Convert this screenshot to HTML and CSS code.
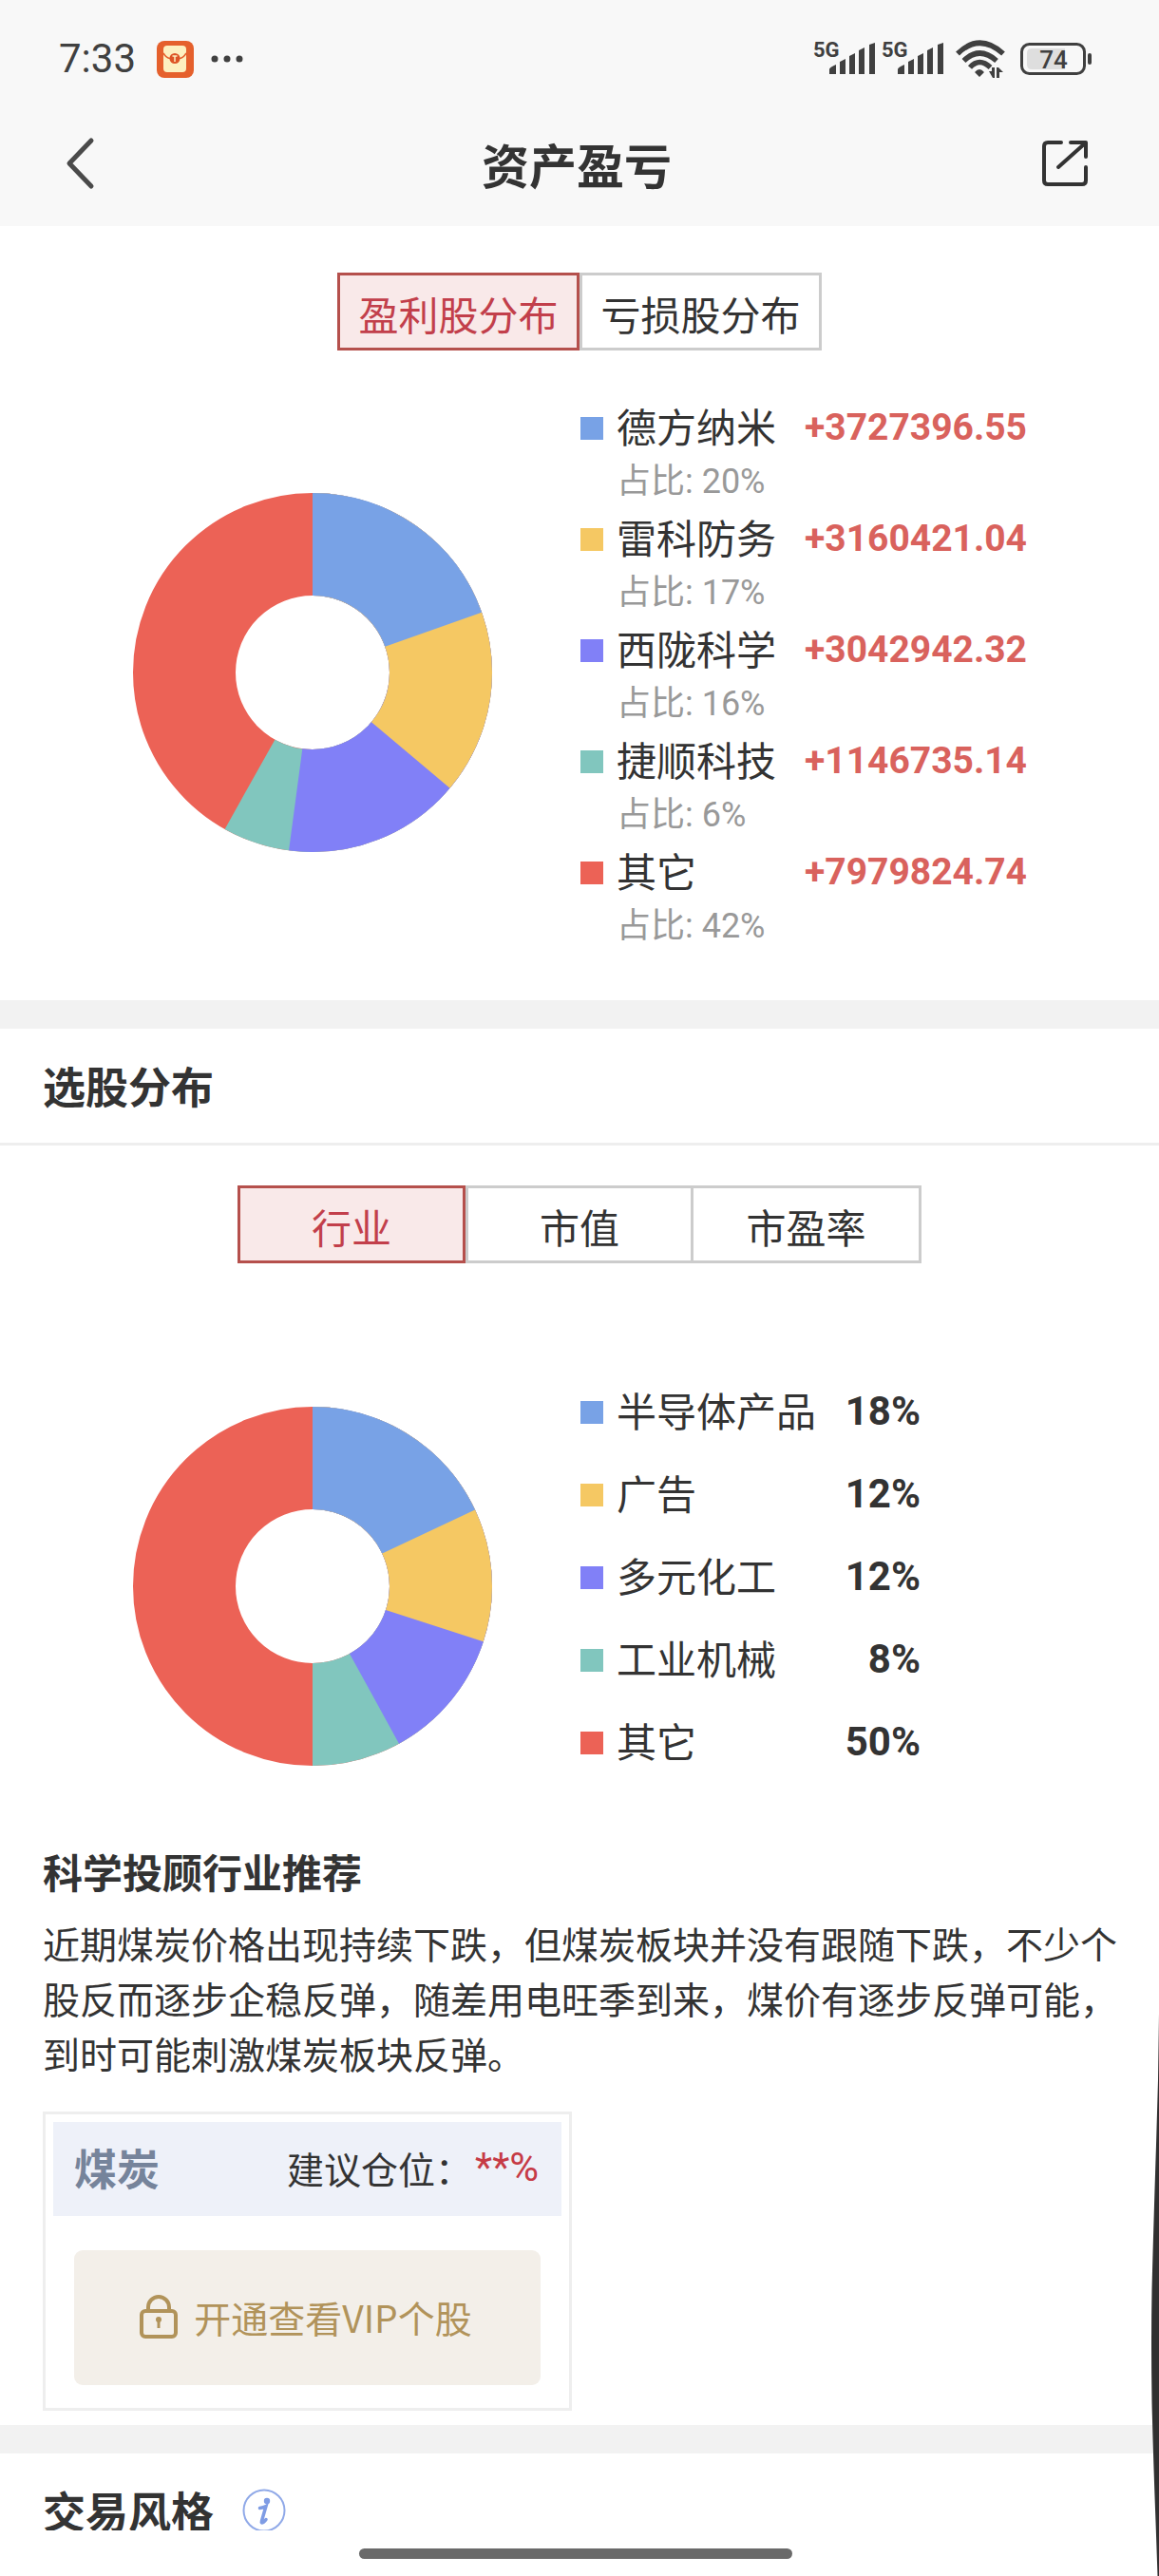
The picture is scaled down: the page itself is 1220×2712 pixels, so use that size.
FILE: index.html
```html
<!DOCTYPE html>
<html lang="zh-CN">
<head>
<meta charset="utf-8">
<meta name="viewport" content="width=device-width, initial-scale=1">
<title>资产盈亏</title>
<link rel="stylesheet" href="styles.css">
</head>
<body>
<div class="app">
  <header class="top">
    <div class="status">
      <span class="status-time">7:33</span>
      <svg class="status-app" width="39" height="39" viewBox="0 0 39 39" aria-hidden="true">
        <rect width="39" height="39" rx="8" fill="#e5602c"/>
        <rect x="7" y="5" width="24" height="28" rx="4" fill="#fdf0c0"/>
        <path d="M7 13q3 5 7 5.500h10q4-.5 7-5.500" fill="none" stroke="#e5602c" stroke-width="1.500"/>
        <circle cx="19" cy="18.500" r="5.500" fill="#dd5526"/>
        <path d="M16.500 16h5M19 16v6" stroke="#fdf0c0" stroke-width="1.500"/>
      </svg>
      <svg class="status-more" width="34" height="8" viewBox="0 0 34 8" fill="#404040" aria-hidden="true">
        <circle cx="4" cy="4" r="3.500"/><circle cx="17" cy="4" r="3.500"/><circle cx="30" cy="4" r="3.500"/>
      </svg>
      <div class="status-right">
        <svg width="66" height="52" viewBox="0 -6 66 52" fill="#404040" role="img" aria-label="5G">
          <text class="net" x="0" y="18">5G</text>
          <path d="M17 36v-5q0-2 7-5v10zM28 36V23l6-3v16zM38 36V17l6-3v22zM48 36V11l6-3v28zM59 36V5l6-2v33z"/>
        </svg>
        <svg width="66" height="52" viewBox="0 -6 66 52" fill="#404040" role="img" aria-label="5G">
          <text class="net" x="0" y="18">5G</text>
          <path d="M17 36v-5q0-2 7-5v10zM28 36V23l6-3v16zM38 36V17l6-3v22zM48 36V11l6-3v28zM59 36V5l6-2v33z"/>
        </svg>
        <svg class="wifi" width="52" height="40" viewBox="0 0 52 40" aria-hidden="true">
          <g fill="none" stroke="#404040" stroke-width="5.500">
            <path d="M2 14.500Q25-8 50 14.500"/>
            <path d="M8.500 22Q25 6 43 22"/>
            <path d="M15 29Q25 18 36.500 29"/>
          </g>
          <path d="M20 34q5-6 10 0l-5 5zM35 33h3v-4h3v11h-2zM43 40V29h2l5 5h-4v6z" fill="#404040"/>
        </svg>
        <svg width="76" height="34" viewBox="0 0 76 34" role="img" aria-label="74%">
          <rect x="1.500" y="1.500" width="66" height="31" rx="8" fill="none" stroke="#404040" stroke-width="3"/>
          <path d="M12 6h35v22H12q-5 0-5-5V11q0-5 5-5z" fill="#dedede"/>
          <rect x="71" y="11" width="4" height="12" rx="2" fill="#404040"/>
          <text class="battery" x="35" y="27" text-anchor="middle">74</text>
        </svg>
      </div>
    </div>
    <div class="navbar">
      <button class="icon-button" type="button" aria-label="返回">
        <svg width="32" height="56" viewBox="0 0 32 56"><path d="M28 4 5 28l23 24" fill="none" stroke="#4a4a4a" stroke-width="5" stroke-linecap="round" stroke-linejoin="round"/></svg>
      </button>
      <h1>资产盈亏</h1>
      <button class="icon-button share-button" type="button" aria-label="分享">
        <svg width="50" height="50" viewBox="0 0 50 50"><path d="M21 3H7Q3 3 3 7v36q0 4 4 4h36q4 0 4-4V29M31 3h16v15M46 4 18 29" fill="none" stroke="#333" stroke-width="4" stroke-linecap="round" stroke-linejoin="round"/></svg>
      </button>
    </div>
  </header>

  <main>
    <section class="profit">
      <div class="tabs">
        <button class="tab tab-wide active" type="button">盈利股分布</button>
        <button class="tab tab-wide" type="button">亏损股分布</button>
      </div>
      <div class="chart chart-profit">
        <!-- Each arc runs from the top to its cumulative share, the longest underneath -->
        <svg class="donut" viewBox="0 0 378 378" role="img" aria-label="盈利股分布图">
          <g class="ring">
            <circle class="s5" r="135"/>
            <circle class="s4" r="135" pathLength="10000" stroke-dasharray="5813 10000"/>
            <circle class="s3" r="135" pathLength="10000" stroke-dasharray="5211 10000"/>
            <circle class="s2" r="135" pathLength="10000" stroke-dasharray="3614 10000"/>
            <circle class="s1" r="135" pathLength="10000" stroke-dasharray="1956 10000"/>
          </g>
        </svg>
        <ul class="legend">
          <li><i class="dot b1"></i><span class="name">德方纳米</span><b class="amount">+3727396.55</b><span class="share">占比: 20%</span></li>
          <li><i class="dot b2"></i><span class="name">雷科防务</span><b class="amount">+3160421.04</b><span class="share">占比: 17%</span></li>
          <li><i class="dot b3"></i><span class="name">西陇科学</span><b class="amount">+3042942.32</b><span class="share">占比: 16%</span></li>
          <li><i class="dot b4"></i><span class="name">捷顺科技</span><b class="amount">+1146735.14</b><span class="share">占比: 6%</span></li>
          <li><i class="dot b5"></i><span class="name">其它</span><b class="amount">+7979824.74</b><span class="share">占比: 42%</span></li>
        </ul>
      </div>
    </section>

    <section class="band">
      <h2 class="section-title ruled">选股分布</h2>
      <div class="tabs tabs-second">
        <button class="tab active" type="button">行业</button>
        <button class="tab" type="button">市值</button>
        <button class="tab" type="button">市盈率</button>
      </div>
      <div class="chart chart-industry">
        <svg class="donut" viewBox="0 0 378 378" role="img" aria-label="行业分布图">
          <g class="ring">
            <circle class="s5" r="135"/>
            <path class="s4" d="M135 0A135 135 0 0 1 -135 0"/>
            <circle class="s3" r="135" pathLength="10000" stroke-dasharray="4200 10000"/>
            <circle class="s2" r="135" pathLength="10000" stroke-dasharray="3000 10000"/>
            <circle class="s1" r="135" pathLength="10000" stroke-dasharray="1800 10000"/>
          </g>
        </svg>
        <ul class="legend">
          <li><i class="dot b1"></i><span class="name">半导体产品</span><b class="percent">18%</b></li>
          <li><i class="dot b2"></i><span class="name">广告</span><b class="percent">12%</b></li>
          <li><i class="dot b3"></i><span class="name">多元化工</span><b class="percent">12%</b></li>
          <li><i class="dot b4"></i><span class="name">工业机械</span><b class="percent">8%</b></li>
          <li><i class="dot b5"></i><span class="name">其它</span><b class="percent">50%</b></li>
        </ul>
      </div>
      <div class="advice">
        <h3>科学投顾行业推荐</h3>
        <p>近期煤炭价格出现持续下跌，但煤炭板块并没有跟随下跌，不少个股反而逐步企稳反弹，随差用电旺季到来，煤价有逐步反弹可能，到时可能刺激煤炭板块反弹。</p>
        <div class="card">
          <div class="card-head">
            <strong>煤炭</strong>
            <span>建议仓位：</span><span class="position">**%</span>
          </div>
          <button class="unlock" type="button">
            <svg width="40" height="46" viewBox="0 0 40 46" fill="none" stroke="#b1935a" stroke-width="4" aria-hidden="true">
              <rect x="2" y="17" width="36" height="27" rx="4"/>
              <path d="M9 17v-4a11 11 0 0 1 22 0v4"/>
              <path d="M20 27v8" stroke-width="3"/>
              <circle cx="20" cy="26" r="3" fill="#b1935a" stroke="none"/>
            </svg>
            <span>开通查看VIP个股</span>
          </button>
        </div>
      </div>
    </section>

    <section class="band">
      <h2 class="section-title">交易风格
        <button class="icon-button info" type="button" aria-label="说明">
          <svg width="46" height="46" viewBox="0 0 46 46">
            <circle cx="23" cy="23" r="21.500" fill="none" stroke="#90a9e8" stroke-width="2"/>
            <circle cx="26" cy="13" r="3.200" fill="#7f9ce4"/>
            <path d="M18.500 20.500q4-.5 6.500-2L20.500 34q-.8 3 1.500 1.500 2-1.500 3-3" fill="none" stroke="#7f9ce4" stroke-width="3.500" stroke-linecap="round"/>
          </svg>
        </button>
      </h2>
    </section>
  </main>

  <footer class="home"><span class="home-bar"></span></footer>
  <svg class="edge" width="8" height="592" viewBox="0 0 8 592" aria-hidden="true"><path d="M8 0Q7.500 70 5 138 2 230 .5 290-.5 345 .5 410 2 470 4.500 535L6.500 592H8z" fill="#303030"/></svg>
</div>
</body>
</html>
```
FILE: styles.css
```css
* {
  box-sizing: border-box;
}

body {
  margin: 0;
  background: #fff;
  color: #333;
  font-family: "Noto Sans CJK SC", sans-serif;
  font-size: 42px;
}

h1, h2, h3, p, ul {
  margin: 0;
  padding: 0;
}

button {
  margin: 0;
  padding: 0;
  border: 0;
  background: none;
  color: inherit;
  font: inherit;
  cursor: pointer;
}

svg {
  display: block;
  flex: none;
}

.app {
  position: relative;
  display: flex;
  flex-direction: column;
  height: 100vh;
  overflow: hidden;
}

/* Status bar and navigation */

.top {
  flex: none;
  background: #f8f8f8;
}

.status {
  display: flex;
  align-items: center;
  height: 124px;
  padding: 0 70px 0 62px;
}

.status-time {
  color: #404040;
  font: 400 42px/48px Roboto, sans-serif;
}

.status-app {
  margin-left: 22px;
}

.status-more {
  margin-left: 18px;
}

.status-right {
  display: flex;
  align-items: center;
  gap: 6px;
  margin-left: auto;
}

.net {
  font: 700 22px Roboto, sans-serif;
}

.wifi {
  margin: 0 10px 0 6px;
}

.battery {
  fill: #404040;
  font: 500 26px Roboto, sans-serif;
}

.navbar {
  display: grid;
  grid-template-columns: 1fr auto 1fr;
  align-items: center;
  height: 114px;
  padding: 0 74px 18px 68px;
}

.navbar h1 {
  font-size: 50px;
  line-height: 60px;
}

.icon-button {
  justify-self: start;
}

.share-button {
  justify-self: end;
}

/* Tabs */

.tabs {
  display: flex;
  justify-content: center;
}

.tab {
  width: 240px;
  height: 82px;
  padding-top: 3px;
  border: 3px solid #ccc;
  line-height: 60px;
}

.tab + .tab + .tab {
  border-left: 0;
}

.tab-wide {
  width: 255px;
}

.tab.active {
  border-color: #b5504c;
  background: #f9e9e9;
  color: #c23f4b;
}

/* Donut charts */

.profit {
  padding: 49px 0 50px;
}

.chart {
  display: flex;
  gap: 93px;
  padding-left: 140px;
}

.chart-profit {
  margin-top: 49px;
}

.chart-profit .donut {
  margin-top: 101px;
}

.donut {
  width: 378px;
  height: 378px;
}

.ring {
  fill: none;
  stroke-width: 108px;
  transform: translate(189px, 189px) rotate(-90deg);
}

.s1 { stroke: #78a2e6; }
.s2 { stroke: #f5c863; }
.s3 { stroke: #8180f7; }
.s4 { stroke: #81c6be; }
.s5 { stroke: #ec6256; }

.legend {
  list-style: none;
}

.legend li {
  display: grid;
  column-gap: 14px;
  align-items: center;
}

.dot {
  width: 24px;
  height: 24px;
  margin-top: 6px;
}

.b1 { background: #78a2e6; }
.b2 { background: #f5c863; }
.b3 { background: #8180f7; }
.b4 { background: #81c6be; }
.b5 { background: #ec6256; }

.legend .name {
  line-height: 56px;
}

.chart-profit li {
  grid-template-columns: 24px 184px auto;
  grid-template-rows: 60px 57px;
}

.chart-industry li {
  grid-template-columns: 24px 210px 96px;
  grid-template-rows: 87px;
}

.amount,
.percent {
  padding-top: 4px;
  line-height: 56px;
  font-family: Roboto, sans-serif;
}

.amount {
  color: #d9625d;
  font-size: 39px;
}

.percent {
  font-size: 42px;
  text-align: right;
}

.share {
  grid-column: 2;
  padding-top: 2px;
  color: #999;
  font: 36px/57px Roboto, "Noto Sans CJK SC", sans-serif;
}

.chart-industry {
  margin-top: 110px;
}

.chart-industry .donut {
  margin-top: 41px;
}

/* Sections */

.band {
  border-top: 30px solid #f2f2f2;
}

.section-title {
  display: flex;
  align-items: center;
  height: 120px;
  padding-left: 45px;
  font-size: 45px;
  line-height: 42px;
}

.ruled {
  height: 123px;
  border-bottom: 3px solid #eee;
}

.tabs-second {
  margin-top: 42px;
}

.advice {
  padding: 65px 40px 15px 45px;
}

.advice h3 {
  font-size: 42px;
  line-height: 60px;
}

.advice p {
  margin-top: 16px;
  font-size: 39px;
  line-height: 58px;
}

.card {
  width: 557px;
  margin-top: 33px;
  padding: 8px 8px 24px;
  border: 3px solid #eee;
  font-size: 39px;
}

.card-head {
  display: flex;
  align-items: center;
  gap: 3px;
  padding: 18px 24px 21px 22px;
  background: #eef1f9;
  line-height: 60px;
}

.card-head strong {
  margin-right: auto;
  color: #76849b;
  font-size: 45px;
}

.position {
  color: #c63b46;
  font-family: Roboto, sans-serif;
  font-size: 42px;
}

.unlock {
  display: flex;
  align-items: center;
  justify-content: center;
  gap: 17px;
  width: 491px;
  height: 142px;
  margin: 36px 22px 0;
  padding: 0 3px 2px 0;
  border-radius: 9px;
  background: #f3efe9;
  color: #b1935a;
}

.info {
  margin-left: 30px;
}

/* The scrolling area ends above the system gesture bar */

main {
  flex: 1;
  min-height: 0;
  overflow: hidden;
}

.home {
  display: flex;
  flex: none;
  justify-content: center;
  height: 48px;
  padding: 19px 8px 0 0;
}

.home-bar {
  width: 456px;
  height: 11px;
  border-radius: 6px;
  background: #6a6a6a;
}

.edge {
  position: absolute;
  right: 0;
  bottom: 0;
}
```
